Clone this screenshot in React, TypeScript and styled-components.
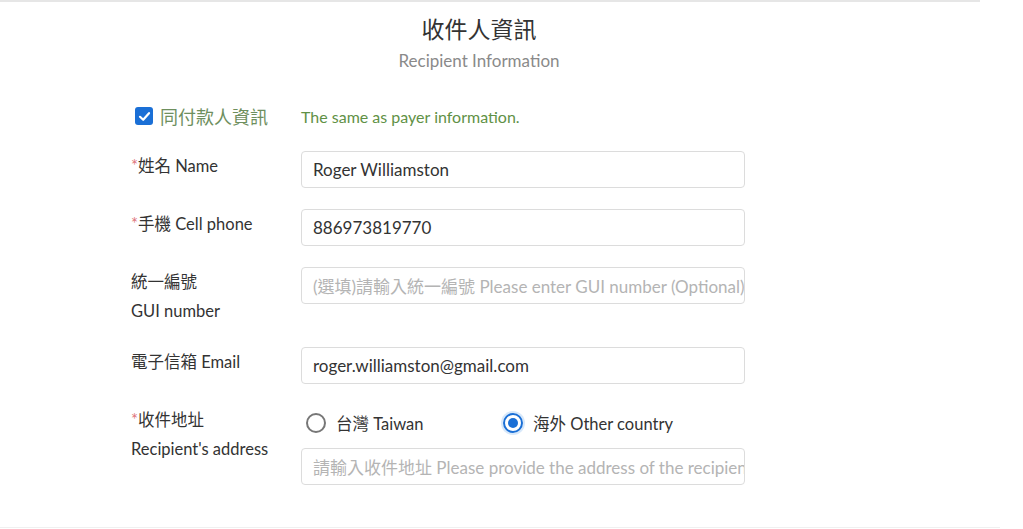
import React from "react";
import styled, { createGlobalStyle } from "styled-components";

const Global = createGlobalStyle`
  html, body { margin: 0; padding: 0; background: #fff; }
  body { font-family: Lato, "Noto Sans CJK TC", sans-serif; color: #333; }
`;

const Page = styled.div`
  width: 1023px;
  height: 529px;
  overflow: hidden;
  position: relative;
  background: #fff;
`;

const TopRule = styled.div`
  width: 980px;
  height: 2px;
  background: #e6e6e6;
`;

const BottomRule = styled.div`
  position: absolute;
  left: 0;
  bottom: 1px;
  width: 1000px;
  height: 1px;
  background: #f0f0f0;
`;

const Header = styled.header`
  width: 958px;
  display: flex;
  flex-direction: column;
  align-items: center;
  padding-top: 12px;
`;

const Title = styled.h2`
  margin: 0;
  font-size: 23px;
  font-weight: 400;
  line-height: 30px;
  color: #333;
`;

const Subtitle = styled.div`
  margin-top: 6px;
  font-size: 17px;
  line-height: 22px;
  color: #8a8a8a;
`;

const Form = styled.div`
  margin-top: 30px;
  padding-left: 131px;
  display: flex;
  flex-direction: column;
  gap: 21px;
`;

const Row = styled.div`
  display: grid;
  grid-template-columns: 170px 444px;
  align-items: start;
`;

const SameRow = styled.div`
  display: grid;
  grid-template-columns: 170px 444px;
  align-items: center;
  height: 28px;
`;

const CheckLabel = styled.label`
  display: flex;
  align-items: center;
  gap: 7px;
  padding-left: 4px;
  font-size: 18px;
  color: #6e8f5e;
`;

const Box = styled.span`
  width: 18px;
  height: 18px;
  border-radius: 3px;
  background: #1a6fd6;
  display: inline-flex;
  align-items: center;
  justify-content: center;
`;

const Note = styled.span`
  font-size: 16px;
  color: #5f9146;
`;

const Label = styled.div`
  margin-top: 1px;
  font-size: 16.5px;
  line-height: 29px;
  color: #333;
`;

const Star = styled.span`
  color: #e0797f;
`;

const Input = styled.div<{ $placeholder?: boolean }>`
  box-sizing: border-box;
  height: 37px;
  border: 1px solid #dcdcdc;
  border-radius: 4px;
  padding: 0 11px;
  display: flex;
  align-items: center;
  font-size: 17px;
  white-space: nowrap;
  overflow: hidden;
  color: ${(p) => (p.$placeholder ? "#b4b4b4" : "#333")};
`;

const AddressCol = styled.div`
  display: flex;
  flex-direction: column;
  gap: 8px;
`;

const RadioGroup = styled.div`
  height: 35px;
  display: flex;
  align-items: center;
  padding-left: 5px;
`;

const RadioOption = styled.label<{ $width?: number }>`
  display: flex;
  align-items: center;
  gap: 10px;
  width: ${(p) => p.$width ?? 0}px;
  font-size: 16.5px;
  color: #333;
`;

const Radio = styled.span<{ $checked?: boolean }>`
  box-sizing: border-box;
  width: 20px;
  height: 20px;
  border-radius: 50%;
  border: 2px solid ${(p) => (p.$checked ? "#1a6fd6" : "#777")};
  display: inline-flex;
  align-items: center;
  justify-content: center;
  box-shadow: ${(p) => (p.$checked ? "0 0 0 2px #d7e8fa" : "none")};
  &::after {
    content: "";
    width: 10px;
    height: 10px;
    border-radius: 50%;
    background: ${(p) => (p.$checked ? "#1a6fd6" : "transparent")};
  }
`;

export default function App() {
  return (
    <Page>
      <Global />
      <TopRule />
      <Header>
        <Title>收件人資訊</Title>
        <Subtitle>Recipient Information</Subtitle>
      </Header>
      <Form>
        <SameRow>
          <CheckLabel>
            <Box>
              <svg width="13" height="13" viewBox="0 0 13 13">
                <path d="M2 6.8 L5.2 9.8 L11 3.2" fill="none" stroke="#fff" strokeWidth="2.2" strokeLinecap="round" strokeLinejoin="round" />
              </svg>
            </Box>
            同付款人資訊
          </CheckLabel>
          <Note>The same as payer information.</Note>
        </SameRow>
        <Row>
          <Label><Star>*</Star>姓名 Name</Label>
          <Input>Roger Williamston</Input>
        </Row>
        <Row>
          <Label><Star>*</Star>手機 Cell phone</Label>
          <Input>886973819770</Input>
        </Row>
        <Row>
          <Label>統一編號<br />GUI number</Label>
          <Input $placeholder>(選填)請輸入統一編號 Please enter GUI number (Optional)</Input>
        </Row>
        <Row>
          <Label>電子信箱 Email</Label>
          <Input>roger.williamston@gmail.com</Input>
        </Row>
        <Row>
          <Label><Star>*</Star>收件地址<br />Recipient's address</Label>
          <AddressCol>
            <RadioGroup>
              <RadioOption $width={197}><Radio />台灣 Taiwan</RadioOption>
              <RadioOption $width={200}><Radio $checked />海外 Other country</RadioOption>
            </RadioGroup>
            <Input $placeholder>請輸入收件地址 Please provide the address of the recipient</Input>
          </AddressCol>
        </Row>
      </Form>
      <BottomRule />
    </Page>
  );
}
